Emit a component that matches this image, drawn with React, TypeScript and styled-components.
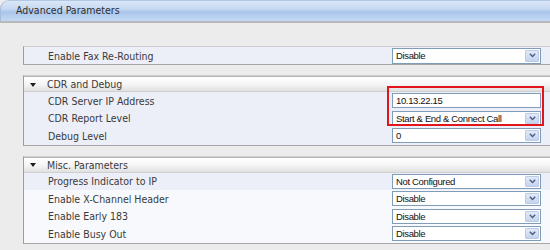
import React from 'react';
import styled, { createGlobalStyle } from 'styled-components';

const GlobalStyle = createGlobalStyle`
    html, body {
        margin: 0;
        padding: 0;
        background: #ececec;
        overflow: hidden;
    }
`;

const LABEL_FONT = `'DejaVu Sans Condensed', 'DejaVu Sans', Tahoma, sans-serif`;
const FIELD_FONT = `'Liberation Sans', Arial, sans-serif`;

const PageDiv = styled.div`
    width: 550px;
    height: 250px;
    overflow: hidden;
    background: #ececec;
`;

const TitleBar = styled.div`
    height: 21px;
    box-sizing: border-box;
    padding-left: 15px;
    border-top-left-radius: 9px;
    border-top: 1px solid #b3c8e4;
    border-left: 1px solid #a7bcd9;
    background: linear-gradient(#dbe7f7 0%, #c6d9f2 40%, #a9c4ea 55%, #b6cff0 75%, #c3d8f3 100%);
    font-family: ${LABEL_FONT};
    font-size: 10.5px;
    line-height: 19px;
    color: #2e2e2e;
`;

const TitleRule = styled.div`
    height: 2px;
    background: #b9b9b9;
`;

const Content = styled.div`
    padding: 23px 0 0 23px;
    display: flex;
    flex-direction: column;
    gap: 10px;
`;

const Table = styled.div`
    position: relative;
    width: 560px;
    border-left: 1px solid #9d9d9d;
    border-bottom: 1px solid #a7a7a7;
    border-top: 1px solid #cfcfcf;
    font-family: ${LABEL_FONT};
    font-size: 10.5px;
    color: #3a3a3a;
`;

const SectionHeader = styled.div`
    height: 16px;
    box-sizing: border-box;
    display: flex;
    align-items: center;
    border-top: 1px solid #b5b5b5;
    border-bottom: 1px solid #cfcfcf;
    background: linear-gradient(#ffffff 0%, #f6f6f6 50%, #e0e0e0 100%);
`;

const Arrow = styled.span`
    width: 0;
    height: 0;
    margin: 1px 11px 0 6px;
    border-left: 3.5px solid transparent;
    border-right: 3.5px solid transparent;
    border-top: 4px solid #1e1e1e;
`;

const Row = styled.div<{ $h: number; $bg: string }>`
    height: ${p => p.$h}px;
    display: flex;
    align-items: center;
    background: ${p => p.$bg};
`;

const Label = styled.div`
    flex: 0 0 368px;
    box-sizing: border-box;
    padding-left: 24px;
    white-space: nowrap;
`;

const FieldBox = styled.div<{ $h: number }>`
    width: 149px;
    height: ${p => p.$h}px;
    box-sizing: border-box;
    display: flex;
    align-items: center;
    justify-content: space-between;
    border: 1px solid #7f9db9;
    background: #fff;
    font-family: ${FIELD_FONT};
    font-size: 9.5px;
    letter-spacing: -0.35px;
    color: #111;
`;

const FieldText = styled.span`
    padding-left: 3px;
    white-space: nowrap;
`;

const DropButton = styled.span`
    width: 14px;
    height: calc(100% - 2px);
    margin-right: 1px;
    box-sizing: border-box;
    display: flex;
    align-items: center;
    justify-content: center;
    border: 1px solid #bccbe6;
    border-radius: 1px;
    background: linear-gradient(#e3eaf8, #c5d3ee);
`;

const Highlight = styled.div`
    position: absolute;
    left: 363px;
    top: 10px;
    width: 157px;
    height: 40px;
    box-sizing: border-box;
    border: 2.5px solid #e2151d;
    pointer-events: none;
`;

function Select({ value, h = 15 }: { value: string; h?: number }) {
    return (
        <FieldBox $h={h}>
            <FieldText>{value}</FieldText>
            <DropButton>
                <svg width='7' height='5' viewBox='0 0 7 5'>
                    <path d='M0.8 0.8 L3.5 3.6 L6.2 0.8' fill='none' stroke='#4a5c80' strokeWidth='1.4' />
                </svg>
            </DropButton>
        </FieldBox>
    );
}

function TextField({ value }: { value: string }) {
    return (
        <FieldBox $h={15}>
            <FieldText>{value}</FieldText>
        </FieldBox>
    );
}

const HILITE = '#edeff8';
const PLAIN = '#f8f9fc';

function App(): JSX.Element {
    return (
        <PageDiv>
            <GlobalStyle />
            <TitleBar>Advanced Parameters</TitleBar>
            <TitleRule />
            <Content>
                <Table>
                    <Row $h={17} $bg={HILITE}>
                        <Label>Enable Fax Re-Routing</Label>
                        <Select value='Disable' h={16} />
                    </Row>
                </Table>

                <Table>
                    <SectionHeader>
                        <Arrow />
                        CDR and Debug
                    </SectionHeader>
                    <Row $h={17.5} $bg={HILITE}>
                        <Label>CDR Server IP Address</Label>
                        <TextField value='10.13.22.15' />
                    </Row>
                    <Row $h={17.5} $bg={HILITE}>
                        <Label>CDR Report Level</Label>
                        <Select value='Start & End & Connect Call' />
                    </Row>
                    <Row $h={17.5} $bg={HILITE}>
                        <Label>Debug Level</Label>
                        <Select value='0' />
                    </Row>
                    <Highlight />
                </Table>

                <Table>
                    <SectionHeader>
                        <Arrow />
                        Misc. Parameters
                    </SectionHeader>
                    <Row $h={17.5} $bg={HILITE}>
                        <Label>Progress Indicator to IP</Label>
                        <Select value='Not Configured' />
                    </Row>
                    <Row $h={17.5} $bg={PLAIN}>
                        <Label>Enable X-Channel Header</Label>
                        <Select value='Disable' />
                    </Row>
                    <Row $h={17.5} $bg={PLAIN}>
                        <Label>Enable Early 183</Label>
                        <Select value='Disable' />
                    </Row>
                    <Row $h={17.5} $bg={PLAIN}>
                        <Label>Enable Busy Out</Label>
                        <Select value='Disable' />
                    </Row>
                </Table>
            </Content>
        </PageDiv>
    );
}

export default App;
